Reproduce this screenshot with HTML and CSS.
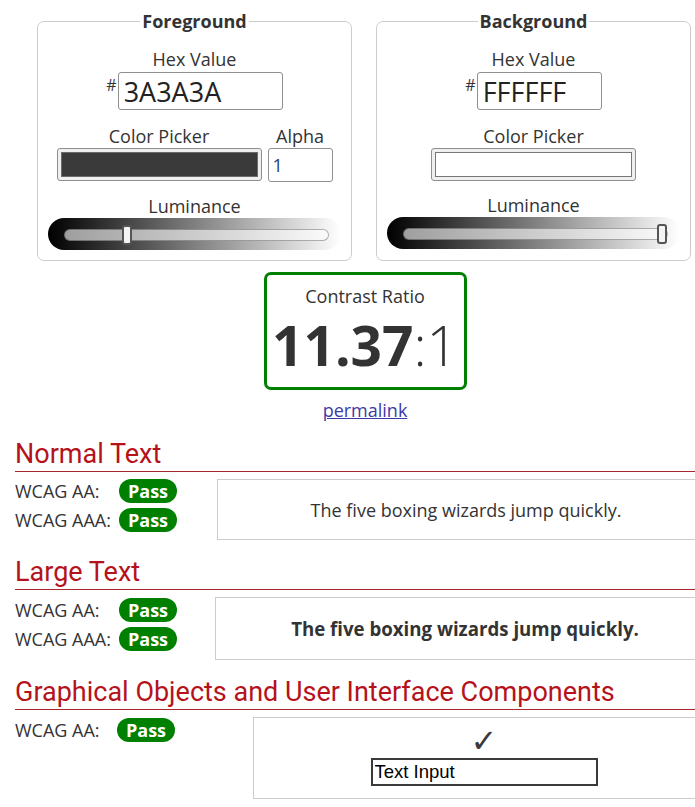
FILE: index.html
```html
<!DOCTYPE html>
<html lang="en">
<head>
<meta charset="utf-8">
<title>Contrast Checker</title>
<link rel="stylesheet" href="styles.css">
</head>
<body>
<main class="page">
  <div class="pickers">
    <fieldset class="panel">
      <legend class="panel-title">Foreground</legend>
      <div class="field-label">Hex Value</div>
      <div class="hex-row">
        <span class="hash">#</span>
        <input class="hex-input hex-input--wide" type="text" value="3A3A3A">
      </div>
      <div class="picker-row">
        <div class="picker-col">
          <div class="field-label">Color Picker</div>
          <div class="swatch-frame"><div class="swatch swatch--dark"></div></div>
        </div>
        <div class="picker-col">
          <div class="field-label">Alpha</div>
          <input class="alpha-input" type="text" value="1">
        </div>
      </div>
      <div class="field-label field-label--lum">Luminance</div>
      <div class="lum">
        <div class="lum-track"><span class="lum-thumb" style="left: calc((100% - 10px) * 0.227)"></span></div>
      </div>
    </fieldset>
    <fieldset class="panel">
      <legend class="panel-title">Background</legend>
      <div class="field-label">Hex Value</div>
      <div class="hex-row">
        <span class="hash">#</span>
        <input class="hex-input hex-input--narrow" type="text" value="FFFFFF">
      </div>
      <div class="picker-row">
        <div class="picker-col">
          <div class="field-label">Color Picker</div>
          <div class="swatch-frame"><div class="swatch swatch--light"></div></div>
        </div>
      </div>
      <div class="field-label field-label--lum">Luminance</div>
      <div class="lum">
        <div class="lum-track"><span class="lum-thumb" style="left: calc((100% - 10px) * 1)"></span></div>
      </div>
    </fieldset>
  </div>

  <div class="ratio">
    <div class="ratio-label">Contrast Ratio</div>
    <div class="ratio-value"><span class="ratio-num">11.37</span><span class="ratio-tail">:1</span></div>
  </div>
  <div class="permalink-row"><a class="permalink" href="#">permalink</a></div>

  <section class="section">
    <h2 class="section-title">Normal Text</h2>
    <div class="result">
      <div class="levels">
        <div class="level"><span class="level-name">WCAG AA:</span><span class="pill">Pass</span></div>
        <div class="level"><span class="level-name">WCAG AAA:</span><span class="pill">Pass</span></div>
      </div>
      <div class="sample sample--normal">The five boxing wizards jump quickly.</div>
    </div>
  </section>

  <section class="section">
    <h2 class="section-title">Large Text</h2>
    <div class="result">
      <div class="levels levels--large">
        <div class="level"><span class="level-name">WCAG AA:</span><span class="pill">Pass</span></div>
        <div class="level"><span class="level-name">WCAG AAA:</span><span class="pill">Pass</span></div>
      </div>
      <div class="sample sample--large">The five boxing wizards jump quickly.</div>
    </div>
  </section>

  <section class="section">
    <h2 class="section-title">Graphical Objects and User Interface Components</h2>
    <div class="result">
      <div class="levels levels--ui">
        <div class="level"><span class="level-name level-name--ui">WCAG AA:</span><span class="pill">Pass</span></div>
      </div>
      <div class="sample sample--ui">
        <div class="check">&#10003;</div>
        <input class="demo-input" type="text" value="Text Input">
      </div>
    </div>
  </section>
</main>
</body>
</html>
```

FILE: styles.css
```css
html, body {
  margin: 0;
  padding: 0;
  overflow: hidden;
  background: #fff;
}

body {
  font-family: "Open Sans", sans-serif;
  font-size: 18px;
  line-height: 24px;
  color: #333;
}

.page {
  width: 700px;
  margin-left: 15px;
}

/* ---------- picker panels ---------- */
.pickers {
  display: flex;
  gap: 24px;
  padding: 9px 0 0 22px;
}

.panel {
  box-sizing: border-box;
  width: 315px;
  min-width: 0;
  margin: 0;
  border: 1px solid #ccc;
  border-radius: 7px;
  padding: 14px 10px 10px;
  display: flex;
  flex-direction: column;
  align-items: center;
}

.panel-title {
  font-weight: 700;
  font-size: 18px;
  line-height: 24px;
  padding: 0 2px;
  margin: 0 auto;
  color: #333;
}

.field-label {
  font-size: 18px;
  line-height: 24px;
  text-align: center;
}

.field-label--lum {
  margin-top: 12px;
}

.hex-row {
  display: flex;
  align-items: flex-start;
  justify-content: center;
  gap: 1px;
  margin-top: 1px;
}

.hash {
  font-size: 16px;
  line-height: 20px;
  padding-top: 3px;
}

.hex-input {
  box-sizing: border-box;
  height: 38px;
  border: 1px solid #8f8f8f;
  border-radius: 3px;
  padding: 0 5px;
  font-family: "Open Sans", sans-serif;
  font-size: 27px;
  color: #222;
  background: #fff;
  margin: 0;
}

.hex-input--wide { width: 165px; }
.hex-input--narrow { width: 125px; }

.picker-row {
  display: flex;
  gap: 6px;
  margin-top: 14px;
}

.picker-col {
  display: flex;
  flex-direction: column;
  align-items: center;
}

.swatch-frame {
  box-sizing: border-box;
  width: 205px;
  height: 33px;
  border: 1px solid #8f8f8f;
  border-radius: 3px;
  background: #efefef;
  padding: 3px 3px;
}

.swatch {
  box-sizing: border-box;
  height: 100%;
  border: 1px solid #6b6b6b;
}

.swatch--dark { background: #3a3a3a; }
.swatch--light { background: #fff; border-color: #777; }

.alpha-input {
  box-sizing: border-box;
  width: 65px;
  height: 34px;
  border: 1px solid #8f8f8f;
  border-radius: 3px;
  padding: 0 4px;
  font-family: "Open Sans", sans-serif;
  font-size: 18px;
  color: #1f3f7a;
  margin: 0;
}

.lum {
  box-sizing: border-box;
  width: 293px;
  height: 32px;
  border-radius: 16px;
  background: linear-gradient(to right, #000 0%, #fff 100%);
  padding: 0 12px 0 16px;
  display: flex;
  align-items: center;
}

.lum-track {
  position: relative;
  flex: 1;
  box-sizing: border-box;
  height: 12px;
  margin-top: 2px;
  border-radius: 6px;
  background: rgba(255, 255, 255, 0.6);
  border: 1px solid rgba(0, 0, 0, 0.3);
}

.lum-thumb {
  position: absolute;
  top: calc(50% - 10px);
  width: 10px;
  height: 20px;
  box-sizing: border-box;
  background: #f4f4f4;
  border: 2px solid #555;
  border-radius: 3px;
}

/* ---------- ratio ---------- */
.ratio {
  box-sizing: border-box;
  width: 203px;
  margin: 11px auto 0;
  border: 3px solid #008000;
  border-radius: 7px;
  padding: 9px 0 6px;
  text-align: center;
}

.ratio-label {
  font-size: 18px;
  line-height: 24px;
}

.ratio-value {
  margin-top: 1px;
  font-size: 55px;
  line-height: 72px;
  color: #333;
}

.ratio-num { font-weight: 700; }
.ratio-tail { font-weight: 300; }

.permalink-row {
  margin-top: 8px;
  text-align: center;
}

.permalink {
  color: #3b3ba6;
  text-decoration: underline;
}

/* ---------- sections ---------- */
.section-title {
  font-family: Roboto, sans-serif;
  font-weight: 400;
  font-size: 27px;
  line-height: 32px;
  color: #b5121b;
  margin: 16px 0 7px;
  padding-bottom: 1px;
  border-bottom: 1px solid #a8282e;
}

.result {
  display: flex;
}

.levels {
  flex: none;
  width: 202px;
  padding-top: 0;
  display: flex;
  flex-direction: column;
  gap: 5px;
}

.levels--large { width: 200px; padding-top: 1px; }
.levels--ui { width: 238px; padding-top: 1px; }

.level {
  display: flex;
  align-items: center;
  height: 24px;
}

.level-name {
  width: 104px;
  flex: none;
}

.level-name--ui { width: 102px; }

.pill {
  display: inline-block;
  background: #008000;
  color: #fff;
  font-weight: 700;
  font-size: 18px;
  line-height: 24px;
  padding: 0 9px;
  border-radius: 12px;
}

.sample {
  flex: 1;
  box-sizing: border-box;
  border: 1px solid #ccc;
  display: flex;
  align-items: center;
  justify-content: center;
}

.sample--normal {
  height: 61px;
  font-size: 18px;
}

.sample--large {
  height: 63px;
  font-size: 18.67px;
  font-weight: 700;
}

.sample--ui {
  height: 82px;
  flex-direction: column;
  justify-content: flex-start;
  padding-top: 6px;
}

.check {
  font-family: "DejaVu Sans", sans-serif;
  font-size: 32px;
  line-height: 34px;
  color: #3a3a3a;
}

.demo-input {
  box-sizing: border-box;
  width: 227px;
  height: 28px;
  margin: 0;
  border: 2px solid #3a3a3a;
  padding: 0 2px;
  font-family: "Liberation Sans", Arial, sans-serif;
  font-size: 18.5px;
  color: #000;
  background: #fff;
}
```
